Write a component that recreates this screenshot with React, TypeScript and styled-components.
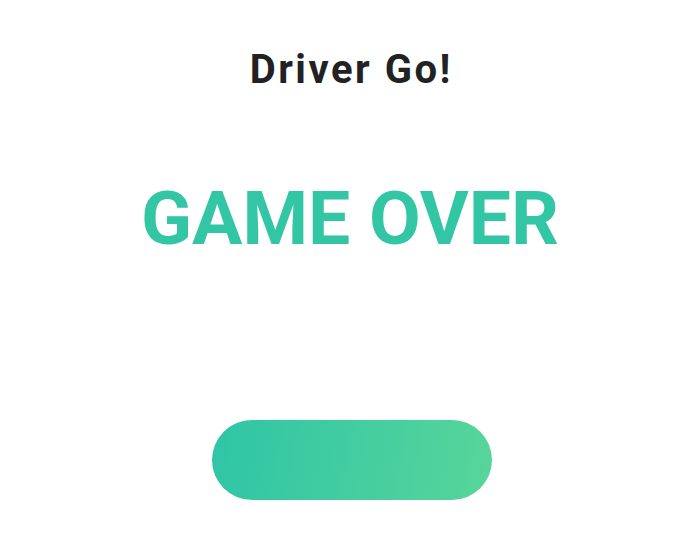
import React from "react";
import styled, { createGlobalStyle } from "styled-components";

const Global = createGlobalStyle`
  html, body { margin: 0; padding: 0; background: #ffffff; }
  body { font-family: Roboto, "DejaVu Sans", sans-serif; }
`;

const Screen = styled.div`
  width: 700px;
  height: 560px;
  display: flex;
  flex-direction: column;
  align-items: center;
  box-sizing: border-box;
  padding-top: 48px;
`;

const Title = styled.h1`
  margin: 0;
  font-family: Roboto, sans-serif;
  font-weight: 700;
  font-size: 40px;
  line-height: 44px;
  color: #222222;
  letter-spacing: 2.5px;
  padding-left: 2.5px;
`;

const Headline = styled.h2`
  margin: 86px 0 0;
  font-family: Roboto, sans-serif;
  font-weight: 700;
  font-size: 75px;
  line-height: 80px;
  color: #33c6a5;
  letter-spacing: 0;
`;

const PlayButton = styled.button`
  margin: 162px 0 0 4px;
  width: 280px;
  height: 80px;
  border: none;
  border-radius: 40px;
  background: linear-gradient(100deg, #2ec5a6 0%, #58d59a 100%);
  cursor: pointer;
`;

export default function App() {
  return (
    <>
      <Global />
      <Screen>
        <Title>Driver Go!</Title>
        <Headline>GAME OVER</Headline>
        <PlayButton aria-label="Play again" />
      </Screen>
    </>
  );
}
